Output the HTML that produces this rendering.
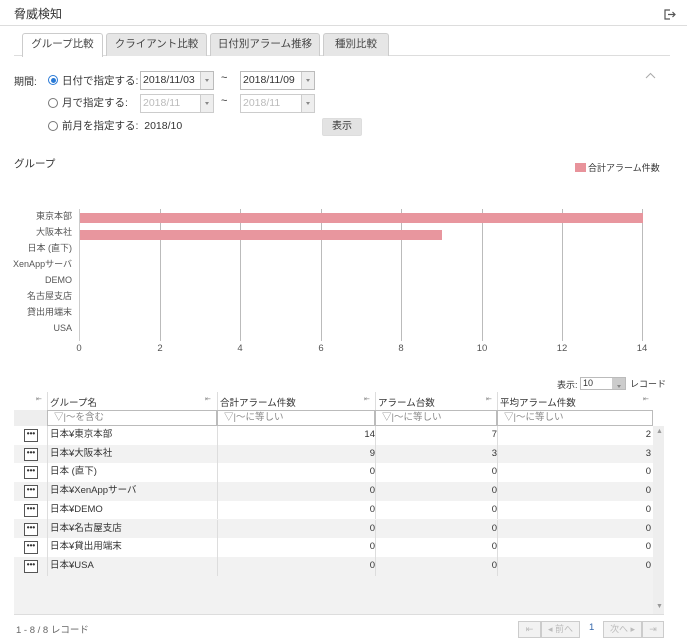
<!DOCTYPE html>
<html><head><meta charset="utf-8">
<style>
*{box-sizing:border-box;margin:0;padding:0}
body{width:687px;height:640px;background:#fff;font-family:"Liberation Sans","Noto Sans CJK JP",sans-serif;font-size:10px;color:#333;position:relative;overflow:hidden}
.a{position:absolute;white-space:nowrap}
.tab{position:absolute;top:33px;height:23px;border:1px solid #ccc;border-bottom:none;background:#e6e6e6;border-radius:3px 3px 0 0;text-align:center;line-height:21px;font-size:10.5px;color:#444}
.sel{position:absolute;height:19px;border:1px solid #bbb;background:#fff;font-size:10.5px;line-height:17px;padding-left:2px}
.sel i{position:absolute;right:0;top:0;width:13px;height:17px;border-left:1px solid #ccc;background:#eee}
.sel i:after{content:"";position:absolute;left:4px;top:7px;border:2.5px solid transparent;border-top:3px solid #888}
.dis{color:#bbb;border-color:#ccc}
.radio{position:absolute;width:10px;height:10px;border:1px solid #777;border-radius:50%;background:#fff}
.grid{position:absolute;width:1px;background:#bbb;top:209px;height:132px}
.xl{position:absolute;top:343px;font-size:9.5px;color:#555;width:20px;text-align:center}
.yl{position:absolute;left:0;width:72px;font-size:9px;color:#555;text-align:right;white-space:nowrap;overflow:hidden;line-height:11px}
.row{position:absolute;left:14px;width:639px;height:18.7px;font-size:9.5px}
.row div{position:absolute;top:0;height:100%;line-height:18.7px}
.dots{position:absolute;left:10px;top:3px;width:14px;height:13px;border:1px solid #555;background:#fff;font-size:8px;line-height:8px;text-align:center;font-weight:bold}
.pb{position:absolute;top:621px;height:17px;border:1px solid #ccc;background:#f2f2f2;color:#bbb;font-size:9px;line-height:15px;text-align:center}
</style></head><body>
<div class="a" style="left:14px;top:5px;font-size:12px;color:#333">脅威検知</div>
<svg class="a" style="left:664px;top:9px" width="12" height="11" viewBox="0 0 12 11"><path d="M6 1H1v9h5" fill="none" stroke="#555" stroke-width="1.2"/><path d="M4 5.5h7M8.5 3l2.5 2.5L8.5 8" fill="none" stroke="#555" stroke-width="1.2"/></svg>
<div class="a" style="left:0;top:25px;width:687px;height:1px;background:#ddd"></div>
<div class="a" style="left:14px;top:55px;width:656px;height:1px;background:#ddd"></div>
<div class="tab" style="left:22px;width:81px;background:#fff;height:24px">グループ比較</div>
<div class="tab" style="left:106px;width:101px">クライアント比較</div>
<div class="tab" style="left:210px;width:110px">日付別アラーム推移</div>
<div class="tab" style="left:323px;width:66px">種別比較</div>

<div class="a" style="left:14px;top:73px;font-size:10px">期間:</div>
<div class="radio" style="left:48px;top:75px;border-color:#2a7ad6"><div style="position:absolute;left:1.5px;top:1.5px;width:5px;height:5px;border-radius:50%;background:#2a7ad6"></div></div>
<div class="a" style="left:62px;top:73px;font-size:10.5px">日付で指定する:</div>
<div class="sel" style="left:140px;top:71px;width:74px">2018/11/03<i></i></div>
<div class="a" style="left:221px;top:72px;font-size:11px">~</div>
<div class="sel" style="left:240px;top:71px;width:75px">2018/11/09<i></i></div>
<div class="radio" style="left:48px;top:98px"></div>
<div class="a" style="left:62px;top:95px;font-size:10.5px">月で指定する:</div>
<div class="sel dis" style="left:140px;top:94px;width:74px">2018/11<i></i></div>
<div class="a" style="left:221px;top:95px;font-size:11px">~</div>
<div class="sel dis" style="left:240px;top:94px;width:75px">2018/11<i></i></div>
<div class="radio" style="left:48px;top:121px"></div>
<div class="a" style="left:62px;top:118px;font-size:10.5px">前月を指定する:&nbsp; 2018/10</div>
<div class="a" style="left:322px;top:118px;width:40px;height:18px;background:#e3e3e3;border:1px solid #ddd;border-radius:2px;text-align:center;line-height:16px;font-size:10px">表示</div>
<svg class="a" style="left:645px;top:72px" width="11" height="7"><path d="M1 6l4.5-4.5L10 6" fill="none" stroke="#aaa" stroke-width="1"/></svg>

<div class="a" style="left:14px;top:156px;font-size:10.5px">グループ</div>
<div class="a" style="left:575px;top:163px;width:11px;height:9px;background:#e8939b"></div>
<div class="a" style="left:588px;top:161px;font-size:9px">合計アラーム件数</div>

<div class="grid" style="left:160px"></div><div class="grid" style="left:240px"></div><div class="grid" style="left:321px"></div><div class="grid" style="left:401px"></div><div class="grid" style="left:482px"></div><div class="grid" style="left:562px"></div><div class="grid" style="left:642px"></div>
<div class="a" style="left:79px;top:209px;width:1px;height:132px;background:#ccc"></div>
<div class="a" style="left:80px;top:213px;width:563px;height:10px;background:#e8969e"></div>
<div class="a" style="left:80px;top:230px;width:362px;height:10px;background:#e8969e"></div>
<div class="xl" style="left:69px">0</div><div class="xl" style="left:150px">2</div><div class="xl" style="left:230px">4</div><div class="xl" style="left:311px">6</div><div class="xl" style="left:391px">8</div><div class="xl" style="left:472px">10</div><div class="xl" style="left:552px">12</div><div class="xl" style="left:632px">14</div>
<div class="yl" style="top:211px">東京本部</div><div class="yl" style="top:227px">大阪本社</div><div class="yl" style="top:243px">日本 (直下)</div><div class="yl" style="top:259px">XenAppサーバ</div><div class="yl" style="top:275px">DEMO</div><div class="yl" style="top:291px">名古屋支店</div><div class="yl" style="top:307px">貸出用端末</div><div class="yl" style="top:323px">USA</div>

<div class="a" style="left:557px;top:378px;font-size:9px">表示:</div>
<div class="sel" style="left:580px;top:377px;width:46px;height:13px;font-size:9px;line-height:11px">10<i style="height:11px;background:#ccc"></i></div>
<div class="a" style="left:630px;top:377px;font-size:9px">レコード</div>

<div class="a" style="left:14px;top:426px;width:650px;height:189px;background:#f2f2f2;border-bottom:1px solid #ddd"></div>
<div class="a" style="left:14px;top:410px;width:33px;height:16px;background:#eee"></div>
<div class="a" style="left:47px;top:392px;width:606px;height:18px;font-size:9.5px">
 <div class="a" style="left:0;top:0;width:1px;height:18px;background:#ddd"></div>
 <div class="a" style="left:3px;top:3px">グループ名</div>
 <div class="a" style="left:170px;top:0;width:1px;height:18px;background:#ddd"></div>
 <div class="a" style="left:173px;top:3px">合計アラーム件数</div>
 <div class="a" style="left:328px;top:0;width:1px;height:18px;background:#ddd"></div>
 <div class="a" style="left:331px;top:3px">アラーム台数</div>
 <div class="a" style="left:450px;top:0;width:1px;height:18px;background:#ddd"></div>
 <div class="a" style="left:453px;top:3px">平均アラーム件数</div>
</div>
<div class="a" style="left:36px;top:395px;font-size:7px;color:#888">⇤</div><div class="a" style="left:205px;top:395px;font-size:7px;color:#888">⇤</div><div class="a" style="left:364px;top:395px;font-size:7px;color:#888">⇤</div><div class="a" style="left:486px;top:395px;font-size:7px;color:#888">⇤</div><div class="a" style="left:643px;top:395px;font-size:7px;color:#888">⇤</div>
<div class="a" style="left:47px;top:410px;width:170px;height:16px;border:1px solid #bbb;font-size:9.5px;color:#888;line-height:14px;padding-left:6px">▽|～を含む</div>
<div class="a" style="left:217px;top:410px;width:158px;height:16px;border:1px solid #bbb;font-size:9.5px;color:#888;line-height:14px;padding-left:6px">▽|～に等しい</div>
<div class="a" style="left:375px;top:410px;width:122px;height:16px;border:1px solid #bbb;font-size:9.5px;color:#888;line-height:14px;padding-left:6px">▽|～に等しい</div>
<div class="a" style="left:497px;top:410px;width:156px;height:16px;border:1px solid #bbb;font-size:9.5px;color:#888;line-height:14px;padding-left:6px">▽|～に等しい</div>
<div class="a" style="left:653px;top:426px;width:11px;height:188px;background:#eee"></div>
<div class="a" style="left:656px;top:428px;font-size:7px;color:#999">▲</div>
<div class="a" style="left:656px;top:603px;font-size:7px;color:#999">▼</div>

<div class="row" style="top:426px;background:#fff"><span class="dots">•••</span><div style="left:36px">日本¥東京本部</div><div style="left:203px;width:158px;text-align:right;border-left:1px solid #ddd">14</div><div style="left:361px;width:122px;text-align:right;border-left:1px solid #ddd">7</div><div style="left:483px;width:156px;text-align:right;border-left:1px solid #ddd;padding-right:2px">2</div></div>
<div class="row" style="top:444.7px;background:#f2f2f2"><span class="dots">•••</span><div style="left:36px">日本¥大阪本社</div><div style="left:203px;width:158px;text-align:right;border-left:1px solid #ddd">9</div><div style="left:361px;width:122px;text-align:right;border-left:1px solid #ddd">3</div><div style="left:483px;width:156px;text-align:right;border-left:1px solid #ddd;padding-right:2px">3</div></div>
<div class="row" style="top:463.4px;background:#fff"><span class="dots">•••</span><div style="left:36px">日本 (直下)</div><div style="left:203px;width:158px;text-align:right;border-left:1px solid #ddd">0</div><div style="left:361px;width:122px;text-align:right;border-left:1px solid #ddd">0</div><div style="left:483px;width:156px;text-align:right;border-left:1px solid #ddd;padding-right:2px">0</div></div>
<div class="row" style="top:482.1px;background:#f2f2f2"><span class="dots">•••</span><div style="left:36px">日本¥XenAppサーバ</div><div style="left:203px;width:158px;text-align:right;border-left:1px solid #ddd">0</div><div style="left:361px;width:122px;text-align:right;border-left:1px solid #ddd">0</div><div style="left:483px;width:156px;text-align:right;border-left:1px solid #ddd;padding-right:2px">0</div></div>
<div class="row" style="top:500.8px;background:#fff"><span class="dots">•••</span><div style="left:36px">日本¥DEMO</div><div style="left:203px;width:158px;text-align:right;border-left:1px solid #ddd">0</div><div style="left:361px;width:122px;text-align:right;border-left:1px solid #ddd">0</div><div style="left:483px;width:156px;text-align:right;border-left:1px solid #ddd;padding-right:2px">0</div></div>
<div class="row" style="top:519.5px;background:#f2f2f2"><span class="dots">•••</span><div style="left:36px">日本¥名古屋支店</div><div style="left:203px;width:158px;text-align:right;border-left:1px solid #ddd">0</div><div style="left:361px;width:122px;text-align:right;border-left:1px solid #ddd">0</div><div style="left:483px;width:156px;text-align:right;border-left:1px solid #ddd;padding-right:2px">0</div></div>
<div class="row" style="top:538.2px;background:#fff"><span class="dots">•••</span><div style="left:36px">日本¥貸出用端末</div><div style="left:203px;width:158px;text-align:right;border-left:1px solid #ddd">0</div><div style="left:361px;width:122px;text-align:right;border-left:1px solid #ddd">0</div><div style="left:483px;width:156px;text-align:right;border-left:1px solid #ddd;padding-right:2px">0</div></div>
<div class="row" style="top:556.9px;background:#f2f2f2"><span class="dots">•••</span><div style="left:36px">日本¥USA</div><div style="left:203px;width:158px;text-align:right;border-left:1px solid #ddd">0</div><div style="left:361px;width:122px;text-align:right;border-left:1px solid #ddd">0</div><div style="left:483px;width:156px;text-align:right;border-left:1px solid #ddd;padding-right:2px">0</div></div>
<div class="a" style="left:47px;top:426px;width:1px;height:150px;background:#ddd"></div>

<div class="a" style="left:16px;top:622px;font-size:9.5px;color:#666">1 - 8 / 8 レコード</div>
<div class="pb" style="left:518px;width:23px">⇤</div>
<div class="pb" style="left:541px;width:39px">◂ 前へ</div>
<div class="a" style="left:589px;top:622px;font-size:9.5px;color:#3366aa">1</div>
<div class="pb" style="left:603px;width:39px">次へ ▸</div>
<div class="pb" style="left:642px;width:22px">⇥</div>
</body></html>
